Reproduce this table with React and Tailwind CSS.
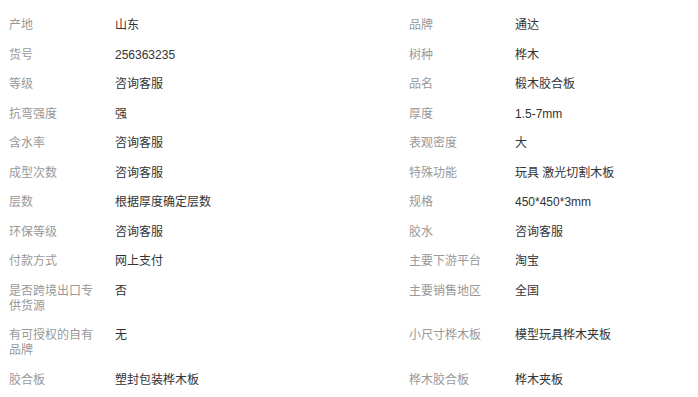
import React from 'react';

const rows = [
  [['产地', '山东'], ['品牌', '通达']],
  [['货号', '256363235'], ['树种', '桦木']],
  [['等级', '咨询客服'], ['品名', '椴木胶合板']],
  [['抗弯强度', '强'], ['厚度', '1.5-7mm']],
  [['含水率', '咨询客服'], ['表观密度', '大']],
  [['成型次数', '咨询客服'], ['特殊功能', '玩具 激光切割木板']],
  [['层数', '根据厚度确定层数'], ['规格', '450*450*3mm']],
  [['环保等级', '咨询客服'], ['胶水', '咨询客服']],
  [['付款方式', '网上支付'], ['主要下游平台', '淘宝']],
  [['是否跨境出口专供货源', '否'], ['主要销售地区', '全国']],
  [['有可授权的自有品牌', '无'], ['小尺寸桦木板', '模型玩具桦木夹板']],
  [['胶合板', '塑封包装桦木板'], ['桦木胶合板', '桦木夹板']],
];

const Attr = ({ label, value }) => (
  <div className="flex items-start pl-[9px] pt-[7px] pb-[7.5px]">
    <div className="w-[90px] shrink-0 text-[#999]">{label}</div>
    <div className="ml-[16px] text-[#333]">{value}</div>
  </div>
);

const App = () => {
  return (
    <div
      className="w-[698px] h-[397px] overflow-hidden bg-white pt-[11px] text-[12px] leading-[15px]"
      style={{ fontFamily: '"Liberation Sans", "Noto Sans CJK SC", sans-serif' }}
    >
      <div className="grid grid-cols-[400px_400px]">
        {rows.map((row, i) => (
          <React.Fragment key={i}>
            <Attr label={row[0][0]} value={row[0][1]} />
            <Attr label={row[1][0]} value={row[1][1]} />
          </React.Fragment>
        ))}
      </div>
    </div>
  );
};

export default App;
